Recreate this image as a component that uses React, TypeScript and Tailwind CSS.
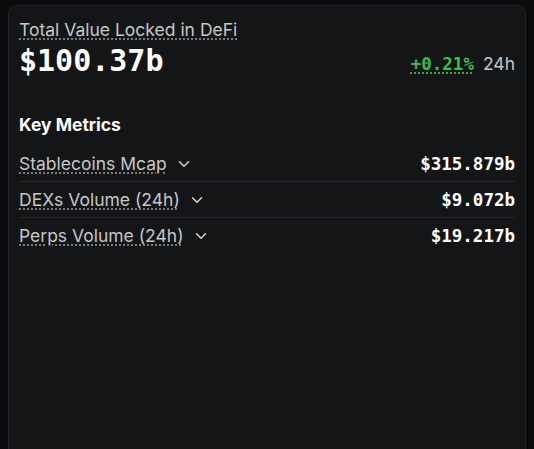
import { ChevronDown } from "lucide-react";

const SANS = { fontFamily: "Inter, 'Noto Sans', sans-serif" };

const METRICS = [
  { label: "Stablecoins Mcap", value: "$315.879b" },
  { label: "DEXs Volume (24h)", value: "$9.072b" },
  { label: "Perps Volume (24h)", value: "$19.217b" },
];

export default function App() {
  return (
    <div className="h-[449px] overflow-hidden bg-[#0a0b0d] px-2 pt-[5px]" style={SANS}>
      <div className="h-[480px] rounded-lg border border-[#222326] bg-[#141517] px-[10px] pt-3">
        <div>
          <span className="text-[17.5px] leading-6 text-[#c6c7c9] underline decoration-dotted decoration-[#8a8b8d] underline-offset-[3px]">
            Total Value Locked in DeFi
          </span>
        </div>
        <div className="mt-[1px] flex items-end justify-between">
          <span className="font-['DejaVu_Sans_Mono',monospace] text-3xl leading-9 font-bold text-white">
            $100.37b
          </span>
          <span className="flex items-baseline gap-[9px] pb-[2px]">
            <span className="font-['DejaVu_Sans_Mono',monospace] text-[17.5px] font-bold text-[#3fb950] underline decoration-dotted decoration-[#3fb950] underline-offset-[3px]">
              +0.21%
            </span>
            <span className="text-[17.5px] text-[#c6c7c9]">24h</span>
          </span>
        </div>

        <div className="mt-[34px] text-[17.5px] leading-6 font-bold text-white">Key Metrics</div>

        <div className="mt-[9px] flex flex-col">
          {METRICS.map((m, i) => (
            <div
              key={m.label}
              className={`flex items-center justify-between pt-[6px] pb-[5px] ${
                i < METRICS.length - 1 ? "border-b border-[#25262a]" : ""
              }`}
            >
              <span className="flex items-center gap-2">
                <span className="text-[17.5px] leading-6 text-[#c6c7c9] underline decoration-dotted decoration-[#8a8b8d] underline-offset-[3px]">
                  {m.label}
                </span>
                <ChevronDown size={18} strokeWidth={2} className="text-[#d4d5d7]" />
              </span>
              <span className="font-['DejaVu_Sans_Mono',monospace] text-[17.5px] leading-6 font-bold text-white">
                {m.value}
              </span>
            </div>
          ))}
        </div>
      </div>
    </div>
  );
}
